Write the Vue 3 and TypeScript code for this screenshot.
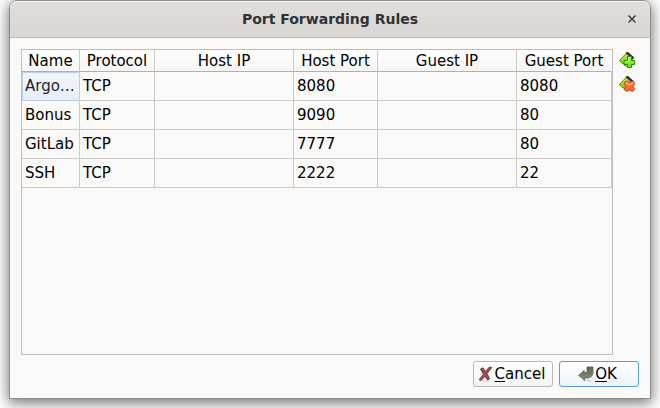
<script setup lang="ts">
interface Rule {
  name: string
  protocol: string
  hostIp: string
  hostPort: string
  guestIp: string
  guestPort: string
}

const rules: Rule[] = [
  { name: 'Argo…', protocol: 'TCP', hostIp: '', hostPort: '8080', guestIp: '', guestPort: '8080' },
  { name: 'Bonus', protocol: 'TCP', hostIp: '', hostPort: '9090', guestIp: '', guestPort: '80' },
  { name: 'GitLab', protocol: 'TCP', hostIp: '', hostPort: '7777', guestIp: '', guestPort: '80' },
  { name: 'SSH', protocol: 'TCP', hostIp: '', hostPort: '2222', guestIp: '', guestPort: '22' },
]
</script>

<template>
  <main class="window">
    <header class="titlebar">
      <h1>Port Forwarding Rules</h1>
      <button class="close" type="button" aria-label="Close">
        <svg width="8" height="8" viewBox="0 0 8 8"><path d="M.5.5l7 7M7.5.5l-7 7" stroke="#2e3436" stroke-width="1.4" /></svg>
      </button>
    </header>
    <div class="content">
      <div class="editor">
        <div class="frame">
          <table>
            <colgroup>
              <col class="c-name" /><col class="c-protocol" /><col />
              <col class="c-host" /><col /><col class="c-guest" />
            </colgroup>
            <thead>
              <tr>
                <th>Name</th>
                <th>Protocol</th>
                <th>Host IP</th>
                <th>Host Port</th>
                <th>Guest IP</th>
                <th>Guest Port</th>
              </tr>
            </thead>
            <tbody>
              <tr v-for="(rule, i) in rules" :key="rule.name">
                <td :class="{ current: i === 0 }">{{ rule.name }}</td>
                <td>{{ rule.protocol }}</td>
                <td>{{ rule.hostIp }}</td>
                <td>{{ rule.hostPort }}</td>
                <td>{{ rule.guestIp }}</td>
                <td>{{ rule.guestPort }}</td>
              </tr>
            </tbody>
          </table>
        </div>
        <div class="tools">
          <button type="button" aria-label="Add rule">
            <svg width="16" height="16" viewBox="0 0 16 16">
              <defs>
                <linearGradient id="leaf" x1="0" y1="0" x2="0" y2="1">
                  <stop offset="0" stop-color="#b8ee50" /><stop offset="1" stop-color="#5cc814" />
                </linearGradient>
                <linearGradient id="plus" x1="0" y1="0" x2="0" y2="1">
                  <stop offset="0" stop-color="#a4f65c" /><stop offset="1" stop-color="#62e010" />
                </linearGradient>
              </defs>
              <path d="M8 .5L15 8L8 15L0 8.500z" fill="url(#leaf)" />
              <path d="M.4 8.500L8 .6" stroke="#d9553a" />
              <path d="M.4 8.500L7 14.800" stroke="#3f5a22" stroke-dasharray="2 1" />
              <path d="M7.500 .3L14.500 6.500" stroke="#2c2c2c" stroke-width="2.400" />
              <path d="M8.500 4.500h4v4H15.500v4H12.500v3h-4v-3H5V8.500H8.500z" fill="url(#plus)" stroke="#2f8a08" />
              <path d="M9.500 9.500v-4h2M6 9.500h3.500" fill="none" stroke="#c4fb98" />
            </svg>
          </button>
          <button type="button" aria-label="Remove rule">
            <svg width="16" height="16" viewBox="0 0 16 16">
              <path d="M8 .5L15 8L8 15L0 8.500z" fill="url(#leaf)" />
              <path d="M.4 8.500L8 .6" stroke="#d9553a" />
              <path d="M.4 8.500L7 14.800" stroke="#3f5a22" stroke-dasharray="2 1" />
              <path d="M7.500 .3L14.500 6.500" stroke="#2c2c2c" stroke-width="2.400" />
              <path d="M7.200 5l3.300 1.300L13.800 5l1.900 2-1.400 3.200 1.400 3.300-1.900 2-3.300-1.300-3.300 1.300-2-2 1.400-3.300L5.200 7z" fill="#fb6a3c" stroke="#dc4420" stroke-linejoin="round" />
              <path d="M7 7l3.500 1.500L14 7" fill="none" stroke="#ffb09a" stroke-width="1.500" />
            </svg>
          </button>
        </div>
      </div>
      <footer>
        <button class="push" type="button">
          <svg width="16" height="16" viewBox="0 0 16 16">
            <path d="M4 14.500q6 1.500 9 0" fill="none" stroke="#cfcfcf" />
            <path d="M2.500 3L5 1.800L7.200 5.800L11.500 1L13.800 1.500L9 7.500L11.500 12.800L9.500 14L7 10.200L3 14.500L1.200 13.700L5.400 8.200z" fill="#b4454f" stroke="#45272b" stroke-width=".8" stroke-linejoin="round" />
          </svg>
          <span><u>C</u>ancel</span>
        </button>
        <button class="push default" type="button">
          <svg width="16" height="16" viewBox="0 0 16 16">
            <defs>
              <linearGradient id="enter" x1="0" y1="0" x2="0" y2="1">
                <stop offset="0" stop-color="#59634f" /><stop offset="1" stop-color="#819a6c" />
              </linearGradient>
            </defs>
            <path d="M5 14.500h8" stroke="#d3d6d6" stroke-width="2" />
            <path d="M9 1H15V6.500Q14.500 11.800 9.500 12H6.500V14.300L.6 9.300L6.200 4.500V6.500H9z" fill="url(#enter)" stroke="#55614d" stroke-width=".8" stroke-linejoin="round" />
          </svg>
          <span><u>O</u>K</span>
        </button>
      </footer>
    </div>
  </main>
</template>

<style>
body {
  background: #fff;
}
</style>

<style scoped>
.window {
  box-sizing: border-box;
  display: flex;
  flex-direction: column;
  min-height: calc(100vh - 9px);
  margin: 0 9px 9px;
  border: 1px solid #8f8e8d;
  border-radius: 8px 8px 0 0;
  background: #faf9f8;
  box-shadow: 0 3px 14px 1px rgba(0, 0, 0, 0.55);
  font: 15px/18px "DejaVu Sans", sans-serif;
  color: #000;
}
button {
  padding: 0;
  border: 0;
  background: none;
  color: inherit;
  font: inherit;
}
svg {
  display: block;
  flex: none;
}
.titlebar {
  display: grid;
  grid-template-columns: 16px 1fr 16px;
  align-items: center;
  height: 36px;
  padding: 0 10px;
  border-bottom: 1px solid #bdb8b1;
  border-radius: 7px 7px 0 0;
  background: linear-gradient(#e1dedb, #dad6d2);
  box-shadow: inset 0 1px #f4f2f1;
}
.titlebar h1 {
  grid-column: 2;
  margin: 0;
  font-size: 14px;
  text-align: center;
  color: #2e3436;
}
.close {
  display: grid;
  place-items: center;
  height: 16px;
}
.content {
  display: flex;
  flex: 1;
  flex-direction: column;
  gap: 6px;
  padding: 11px;
}
.editor {
  display: flex;
  flex: 1;
  gap: 6px;
}
.frame {
  flex: 1;
  border: 1px solid #bfbebd;
}
table {
  width: 100%;
  table-layout: fixed;
  border-spacing: 0;
}
.c-name { width: 58px; }
.c-protocol { width: 75px; }
.c-host { width: 84px; }
.c-guest { width: 95px; }
th,
td {
  box-sizing: border-box;
  overflow: hidden;
  border-right: 1px solid #cacac9;
  border-bottom: 1px solid #cacac9;
  white-space: nowrap;
}
th {
  height: 22px;
  padding: 0;
  border-bottom-color: #b1b0af;
  background: linear-gradient(#fff, #f6f5f4);
  font-weight: normal;
}
th:last-child {
  border-right-color: transparent;
}
td {
  height: 29px;
  padding: 0 3px;
}
.current {
  border-color: #bdcfe4;
  background: linear-gradient(#f3f6fa, #e6edf6);
  box-shadow: inset 1px 1px #bdcfe4;
  color: #1c2530;
}
.tools {
  display: flex;
  flex-direction: column;
  gap: 8px;
  width: 20px;
  padding-top: 3px;
}
.tools button {
  width: 16px;
  height: 16px;
}
footer {
  display: flex;
  justify-content: flex-end;
  gap: 6px;
}
.push {
  box-sizing: border-box;
  display: flex;
  align-items: center;
  justify-content: center;
  gap: 1px;
  width: 80px;
  height: 26px;
  padding-right: 3px;
  border: 1px solid #b9b8b7;
  border-radius: 3px;
  background: linear-gradient(#fff, #f5f4f3);
}
.push.default {
  border-color: #5c9fe0;
  background: linear-gradient(#fff, #eff4fb);
}
.push u {
  text-underline-offset: 2px;
}
</style>
